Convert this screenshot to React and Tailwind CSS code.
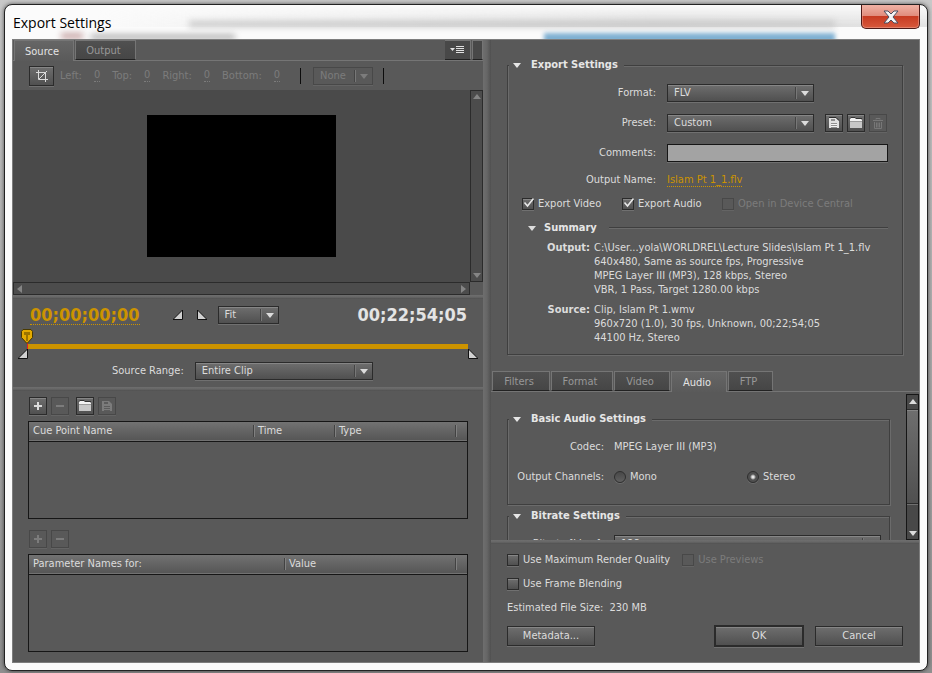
import React, { useState } from 'react'

const btn = 'border border-[#2b2b2b] bg-linear-to-b from-[#6e6e6e] to-[#505050] shadow-[inset_0_1px_0_#868686,0_1px_0_#707070]'
const offBtn = 'border border-[#484848] bg-[#595959] text-[#7c7c7c] shadow-[0_1px_0_#646464]'

function Triangle({ dir = 'down', className = '' }) {
  const points = {
    down: '0,2 8,2 4,7',
    up: '0,6 8,6 4,1',
    left: '6,0 6,8 1,4',
    right: '2,0 2,8 7,4',
  }
  return (
    <svg viewBox="0 0 8 8" className={`w-2 h-2 shrink-0 fill-current ${className}`}>
      <polygon points={points[dir]} />
    </svg>
  )
}

function Select({ id, label, options, className = '', disabled }) {
  return (
    <div className={`relative h-[18px] ${className}`}>
      <select
        id={id}
        aria-label={label}
        disabled={disabled}
        className={`block w-full h-full pl-1.5 pr-5 leading-4 appearance-none outline-none ${disabled ? offBtn : btn}`}
      >
        {options.map(o => <option key={o}>{o}</option>)}
      </select>
      <div className={`absolute right-[5px] inset-y-0 flex items-center gap-1 pointer-events-none ${disabled ? 'text-[#7c7c7c]' : 'text-[#dcdcdc]'}`}>
        <span className="w-0.5 h-3 border-l border-[#444] bg-[#777]" />
        <Triangle />
      </div>
    </div>
  )
}

function SmallButton({ label, disabled, className = '', children }) {
  return (
    <button
      aria-label={label}
      disabled={disabled}
      className={`w-[18px] h-[18px] shrink-0 flex items-center justify-center ${disabled ? offBtn : btn} ${className}`}
    >
      {children}
    </button>
  )
}

const PlusIcon = () => (
  <svg viewBox="0 0 10 10" className="w-2.5 h-2.5 fill-current"><path d="M4 1h2v3h3v2H6v3H4V6H1V4h3z" /></svg>
)

const MinusIcon = () => (
  <svg viewBox="0 0 10 10" className="w-2.5 h-2.5 fill-current"><path d="M1 4h8v2H1z" /></svg>
)

const FolderIcon = () => (
  <svg viewBox="0 0 14 12" className="w-3.5 h-3 shrink-0">
    <path d="M1 4V2l1-1h4l1 1h5l1 1v1z" fill="#f2f2f2" />
    <path d="M1 1.500 2 .5h4l1 1h6" fill="none" stroke="#333" />
    <path d="M1 4h12v7H1z" fill="#c8c8c8" />
    <path d="M1 4.500h12" stroke="#9c9c9c" />
  </svg>
)

function SaveIcon({ off }) {
  return (
    <svg viewBox="0 0 12 12" className="w-3 h-3 shrink-0">
      <path d="M1 1h7l3 3v7H1z" fill={off ? '#7c7c7c' : '#e2e2e2'} />
      <path d="M3 2h4v2H3zM3 6h6v5H3z" fill={off ? '#5c5c5c' : '#8f8f8f'} />
      <path d="M3 7.500h6M3 9.500h6" stroke={off ? '#7c7c7c' : '#f4f4f4'} />
      {!off && <path d="M1 .5h7l3 3" fill="none" stroke="#2b2b2b" />}
    </svg>
  )
}

const TrashIcon = () => (
  <svg viewBox="0 0 12 12" className="w-3 h-3 shrink-0 fill-none stroke-[#777]">
    <path d="M1 3.500h10M4 2.500V1.500h4v1M2.500 5v6.500h7V5M4.500 5.500v5M6 5.500v5M7.500 5.500v5" />
  </svg>
)

const CropIcon = () => (
  <svg viewBox="0 0 14 14" className="w-3.5 h-3.5 fill-none stroke-[#dadada]">
    <path d="M3.500 1v9.500H13M1 3.500h9.500V13M4 10 12 2" />
  </svg>
)

function Checkbox({ label, checked, disabled, className = '' }) {
  const [on, setOn] = useState(!!checked)
  return (
    <label className={`flex items-center gap-1 ${disabled ? 'text-[#7c7c7c]' : ''} ${className}`}>
      <span className="relative w-3 h-3 shrink-0">
        <input
          type="checkbox"
          checked={on}
          disabled={disabled}
          onChange={e => setOn(e.target.checked)}
          className={`block w-3 h-3 appearance-none ${disabled ? offBtn : btn}`}
        />
        {on && (
          <svg viewBox="0 0 12 12" className="absolute left-px -top-px w-3 h-3 fill-none stroke-[#e8e8e8] stroke-[1.6] pointer-events-none">
            <path d="M1.500 5.500 4.500 9 10.500 1.500" />
          </svg>
        )}
      </span>
      {label}
    </label>
  )
}

function Radio({ label, checked, onChange, className = '' }) {
  return (
    <label className={`flex items-center gap-1 ${className}`}>
      <input
        type="radio"
        name="channels"
        checked={checked}
        onChange={onChange}
        className={`w-3 h-3 appearance-none rounded-full border border-[#2e2e2e] shadow-[0_1px_0_#6b6b6b] ${checked
          ? 'bg-[radial-gradient(circle,#e6e6e6_0_1px,#505050_3px)]'
          : 'bg-linear-to-b from-[#484848] to-[#606060]'}`}
      />
      {label}
    </label>
  )
}

// the legend's own background hides the highlight line that runs behind it
function Group({ title, className = '', children }) {
  return (
    <fieldset className={`min-w-0 border border-[#3f3f3f] shadow-[inset_1px_1px_0_#6b6b6b,1px_1px_0_#6b6b6b] ${className}`}>
      <legend className="flex items-center gap-2.5 h-4 ml-px pl-1 pr-1.5 font-bold text-[#e6e6e6] bg-[#595959]">
        <Triangle />
        {title}
      </legend>
      {children}
    </fieldset>
  )
}

function Tab({ label, active, onClick, className = '' }) {
  return (
    <button
      role="tab"
      aria-selected={active}
      onClick={onClick}
      className={`pt-px pr-1 border border-[#757575] ${className} ${active
        ? 'h-[21px] border-b-0 bg-linear-to-b from-[#666] to-[#5a5a5a] text-[#e4e4e4]'
        : 'h-5 border-b-[#222] bg-linear-to-b from-[#505050] to-[#464646] text-[#989898]'}`}
    >
      {label}
    </button>
  )
}

const Divider = () => <div className="h-1 bg-linear-to-b from-[#6e6e6e] via-[#676767] to-[#4f4f4f]" />

function Grid({ columns, className = '' }) {
  return (
    <div className={`h-[98px] border border-[#161616] ${className}`}>
      <table className="w-full table-fixed border-collapse">
        <thead>
          <tr className="h-[19px] border-b border-[#161616] bg-linear-to-b from-[#727272] to-[#565656]">
            {columns.map(([name, width], i) => (
              <th key={i} className={`p-0 font-normal text-left ${width}`}>
                <span className={`flex items-center h-3 pl-1 ${i ? 'border-l border-[#424242] shadow-[inset_1px_0_0_#808080]' : ''}`}>{name}</span>
              </th>
            ))}
          </tr>
        </thead>
        <tbody />
      </table>
    </div>
  )
}

const Marker = ({ flip }) => (
  <svg viewBox="0 0 10 10" className="w-2.5 h-2.5 shrink-0 fill-[#d0d0d0]">
    <path d={flip ? 'M.5 0v9.500H10z' : 'M9.500 0v9.500H0z'} stroke="#111" />
    <path d={flip ? 'M1 2v7h7z' : 'M9 2v7H2z'} />
  </svg>
)

function Playhead() {
  return (
    <svg viewBox="0 0 12 20" className="absolute left-2 -top-0.5 w-3 h-5">
      <path d="M6.500 13v7" stroke="#d22" />
      <path d="M.5 2.500 2 .5h8l1.500 2v6L6.500 14h-1L.5 8.500z" fill="#e3aa00" stroke="#4a3a00" />
      <path d="M4 3v3M6 3v9M8 3v3" stroke="#553f00" />
    </svg>
  )
}

function SourcePanel() {
  const [tab, setTab] = useState('Source')
  return (
    <section className="min-w-0">
      <div className="flex h-[21px] pl-px border-b border-[#757575]">
        <div role="tablist" className="flex gap-px">
          <Tab label="Source" active={tab === 'Source'} onClick={() => setTab('Source')} className="w-[60px]" />
          <Tab label="Output" active={tab === 'Output'} onClick={() => setTab('Output')} className="w-[61px]" />
        </div>
        <button aria-label="Panel menu" className="ml-auto w-[26px] h-5 flex items-center justify-center border-y border-r border-[#757575] border-b-[#222] bg-[#484848]">
          <svg viewBox="0 0 15 10" className="w-[15px] h-2.5 fill-none stroke-[#e0e0e0]">
            <path d="M0 3h5L2.500 6z" fill="#e0e0e0" stroke="none" />
            <path d="M6 1.500h8M6 3.500h8M6 5.500h8M6 7.500h8" />
          </svg>
        </button>
        <div className="ml-px w-[11px] h-5 border border-[#757575] border-b-[#222] bg-[#484848]" />
      </div>

      <div className="flex items-center h-[29px] pl-4 pt-px text-[#7c7c7c]">
        <button aria-label="Crop" className={`w-[25px] h-5 mr-1.5 flex items-center justify-center ${btn}`}>
          <CropIcon />
        </button>
        {['Left', 'Top', 'Right', 'Bottom'].map(side => (
          <div key={side} className="flex gap-3 mr-3">
            {side}:
            <button disabled aria-label={side} className="h-3.5 leading-3.5 border-b border-dotted border-[#7c7c7c]">0</button>
          </div>
        ))}
        <span className="w-px h-4 ml-2 mr-3 bg-[#0c0c0c]" />
        <Select label="Crop proportions" options={['None']} disabled className="w-[60px]" />
        <span className="w-px h-4 ml-2.5 bg-[#0c0c0c]" />
      </div>

      <div className="grid grid-cols-[1fr_13px]">
        <div className="h-48 flex items-center justify-center bg-[#4a4a4a]">
          <div className="w-[189px] h-[142px] bg-black" />
        </div>
        <div className="flex flex-col justify-between items-center py-0.5 border border-[#2b2b2b] bg-[#4c4c4c] text-[#858585]">
          <Triangle dir="up" />
          <Triangle />
        </div>
        <div className="h-[13px] flex justify-between items-center px-0.5 border border-[#2b2b2b] bg-[#4c4c4c] text-[#858585]">
          <Triangle dir="left" />
          <Triangle dir="right" />
        </div>
      </div>

      <Divider />

      <div className="flex items-center h-8 pl-[17px] pr-4">
        <button className="h-5 text-lg leading-5 font-bold text-[#cc9300] border-b border-dotted border-[#cc9300]">00;00;00;00</button>
        <div className="flex gap-3.5 ml-[33px] mr-[11px]">
          <button aria-label="Set in point"><Marker /></button>
          <button aria-label="Set out point"><Marker flip /></button>
        </div>
        <Select label="Zoom" options={['Fit', '50%', '100%']} className="w-[61px]" />
        <span className="ml-auto text-lg leading-5 font-bold text-[#e4e4e4]">00;22;54;05</span>
      </div>

      <div className="relative pt-[13px] px-[15px]">
        <div className="h-[5px] bg-[#cc9300]" />
        <div className="flex justify-between -mx-2.5">
          <Marker />
          <Marker flip />
        </div>
        <Playhead />
      </div>

      <div className="flex items-center gap-[11px] pt-[3px] pb-[7px] pl-[99px]">
        <label htmlFor="range">Source Range:</label>
        <Select id="range" options={['Entire Clip', 'Work Area', 'Custom']} className="w-[178px]" />
      </div>

      <Divider />

      <div className="pl-[15px] pr-[15px] pt-1.5">
        <div className="flex gap-1 pl-px pb-1.5">
          <SmallButton label="Add cue point"><PlusIcon /></SmallButton>
          <SmallButton label="Remove cue point" disabled><MinusIcon /></SmallButton>
          <SmallButton label="Load cue points" className="ml-[3px]"><FolderIcon /></SmallButton>
          <SmallButton label="Save cue points" disabled><SaveIcon off /></SmallButton>
        </div>
        <Grid columns={[['Cue Point Name', ''], ['Time', 'w-[81px]'], ['Type', 'w-[121px]'], ['', 'w-[12px]']]} />
        <div className="flex gap-1 pl-px pt-[11px] pb-1.5">
          <SmallButton label="Add parameter" disabled><PlusIcon /></SmallButton>
          <SmallButton label="Remove parameter" disabled><MinusIcon /></SmallButton>
        </div>
        <Grid columns={[['Parameter Names for:', ''], ['Value', 'w-[171px]'], ['', 'w-[12px]']]} className="mb-2.5" />
      </div>
    </section>
  )
}

function Row({ label, htmlFor, className = '', children }) {
  return (
    <div className={`flex items-center gap-[11px] ${className}`}>
      <label htmlFor={htmlFor} className="w-[148px] shrink-0 text-right">{label}:</label>
      {children}
    </div>
  )
}

function ExportGroup() {
  return (
    <Group title="Export Settings" className="h-[298px]">
      <div className="pt-[5px]">
        <Row label="Format" htmlFor="format" className="h-[30px]">
          <Select id="format" options={['FLV', 'F4V', 'H.264']} className="w-[147px]" />
        </Row>
        <Row label="Preset" htmlFor="preset" className="h-[30px]">
          <Select id="preset" options={['Custom']} className="w-[147px]" />
          <div className="flex gap-1">
            <SmallButton label="Save preset"><SaveIcon /></SmallButton>
            <SmallButton label="Import preset"><FolderIcon /></SmallButton>
            <SmallButton label="Delete preset" disabled><TrashIcon /></SmallButton>
          </div>
        </Row>
        <Row label="Comments" htmlFor="comments" className="h-[30px] pr-3.5">
          <input id="comments" className="min-w-0 flex-1 h-[18px] px-1 border border-[#161616] bg-[#a3a3a3] text-black outline-none shadow-[0_1px_0_#707070]" />
        </Row>
        <Row label="Output Name" className="h-6">
          <a href="#" className="h-3.5 leading-3.5 text-[#cc9300] border-b border-dotted border-[#cc9300]">Islam Pt 1_1.flv</a>
        </Row>
      </div>
      <div className="flex items-center h-6 pl-3.5">
        <Checkbox label="Export Video" checked className="w-[100px]" />
        <Checkbox label="Export Audio" checked className="w-[100px]" />
        <Checkbox label="Open in Device Central" disabled />
      </div>
      <div className="flex items-center gap-2 h-6 pl-5 pr-3.5">
        <Triangle />
        <h3 className="font-bold text-[#e6e6e6]">Summary</h3>
        <span className="flex-1 h-0.5 ml-1 border-t border-[#3f3f3f] bg-[#6b6b6b]" />
      </div>
      <dl className="grid grid-cols-[82px_1fr] gap-x-1 gap-y-1.5 pt-px leading-3.5">
        <dt className="font-bold text-right">Output:</dt>
        <dd className="whitespace-nowrap">
          C:\User...yola\WORLDREL\Lecture Slides\Islam Pt 1_1.flv<br />
          640x480, Same as source fps, Progressive<br />
          MPEG Layer III (MP3), 128 kbps, Stereo<br />
          VBR, 1 Pass, Target 1280.00 kbps
        </dd>
        <dt className="font-bold text-right">Source:</dt>
        <dd className="whitespace-nowrap">
          Clip, Islam Pt 1.wmv<br />
          960x720 (1.0), 30 fps, Unknown, 00;22;54;05<br />
          44100 Hz, Stereo
        </dd>
      </dl>
    </Group>
  )
}

const TABS = [
  ['Filters', 'w-[58px]'],
  ['Format', 'w-[62px]'],
  ['Video', 'w-[56px]'],
  ['Audio', 'w-[56px]'],
  ['FTP', 'w-[45px]'],
]

function SettingsPanel() {
  const [tab, setTab] = useState('Audio')
  const [channels, setChannels] = useState('Stereo')
  return (
    <section className="min-w-0">
      <div className="pt-[17px] pl-4 pr-4">
        <ExportGroup />
      </div>

      <div role="tablist" className="flex gap-px h-[21px] mt-4 pl-px border-b border-[#757575]">
        {TABS.map(([name, width]) => (
          <Tab key={name} label={name} active={tab === name} onClick={() => setTab(name)} className={width} />
        ))}
      </div>

      <div className="flex h-[148px]">
        <div className="flex-1 min-w-0 h-full overflow-hidden pl-4 pr-4 pt-[19px]">
          <Group title="Basic Audio Settings" className="h-[94px]">
            <div className="flex items-center gap-2.5 h-[30px] mt-[5px]">
              <span className="w-24 text-right">Codec:</span>
              MPEG Layer III (MP3)
            </div>
            <div className="flex items-center h-[30px]">
              <span className="w-24 mr-2.5 text-right whitespace-nowrap">Output Channels:</span>
              <Radio label="Mono" checked={channels === 'Mono'} onChange={() => setChannels('Mono')} className="w-[133px]" />
              <Radio label="Stereo" checked={channels === 'Stereo'} onChange={() => setChannels('Stereo')} />
            </div>
          </Group>
          <Group title="Bitrate Settings" className="h-[94px] mt-[3px]">
            <div className="flex items-center gap-2.5 h-[30px] mt-[5px] pr-2">
              <label htmlFor="bitrate" className="w-24 text-right">Bitrate [kbps]:</label>
              <Select id="bitrate" options={['128']} className="flex-1" />
            </div>
          </Group>
        </div>
        <div className="w-[13px] mt-0.5 flex flex-col items-center border border-[#161616] bg-[#484848] text-[#dcdcdc]">
          <Triangle dir="up" className="my-[3px]" />
          <div className={`w-full h-[95px] border-x-0 ${btn}`} />
          <Triangle className="mt-auto mb-0.5" />
        </div>
      </div>

      <Divider />

      <div className="pl-4 pr-4 pt-1">
        <div className="flex items-center gap-3 h-6">
          <Checkbox label="Use Maximum Render Quality" />
          <Checkbox label="Use Previews" disabled />
        </div>
        <div className="flex items-center h-6">
          <Checkbox label="Use Frame Blending" />
        </div>
        <div className="flex items-center gap-1.5 h-6">
          <span>Estimated File Size:</span>
          <span>230 MB</span>
        </div>
        <div className="flex items-center h-8">
          <button className={`w-[88px] h-5 ${btn}`}>Metadata...</button>
          <button className={`ml-auto mr-[11px] w-[90px] h-[22px] ${btn} border-2`}>OK</button>
          <button className={`w-[88px] h-5 ${btn}`}>Cancel</button>
        </div>
      </div>
    </section>
  )
}

function TitleBar() {
  return (
    <header className="relative flex h-[34px] pl-2 pr-[7px]">
      <div className="absolute inset-0 overflow-hidden rounded-t-md">
        <div className="absolute left-0 right-0 top-0 h-[22px] bg-linear-to-r from-transparent from-10% via-[#dadada] via-70% to-[#e4e4e4] mask-t-from-10%" />
        <div className="absolute left-[20%] right-[10%] top-4 h-1.5 bg-[#c9c9c9] blur-[3px]" />
        <div className="absolute left-14 w-[22px] bottom-0 h-1.5 bg-[#c7a5a5] blur-[3px]" />
        <div className="absolute left-[86px] w-36 bottom-0 h-1 bg-[#999] blur-[3px]" />
        <div className="absolute left-[58.500%] right-[10%] -bottom-1 h-2.5 bg-[#7fb0d2] blur-[2px]" />
      </div>
      <h1 className="relative pt-1 text-[14px] leading-7 text-black font-['Open_Sans',sans-serif]">Export Settings</h1>
      <button
        aria-label="Close"
        className="relative ml-auto w-[59px] h-6 flex items-center justify-center rounded-b-[5px] border border-t-0 border-[#4d1a17] bg-[linear-gradient(#f0b3a6,#e08b7b_48%,#c73b22_50%,#d8593c)] shadow-[inset_0_0_0_1px_#f0a99c80]"
      >
        <svg viewBox="0 0 16 14" className="w-4 h-3.5">
          <path d="M1 1h4l3 3 3-3h4l-5 6 5 6h-4l-3-3-3 3H1l5-6z" fill="#f4f4f4" stroke="#4c4f60" />
        </svg>
      </button>
    </header>
  )
}

export default function App() {
  return (
    <main className="min-h-screen pt-1 pl-1 pr-1 bg-linear-to-b from-[#c8c8c8] to-[#8f8f8f] text-[11px] leading-4 text-[#dcdcdc] font-['DejaVu_Sans_Condensed','DejaVu_Sans',sans-serif]">
      <div className="rounded-lg border border-[#222] bg-[#fbfbfb] shadow-[0_0_4px_#0009]">
        <TitleBar />
        <div className="mx-[7px] mb-[7px] border border-[#7d7d7d] bg-[#595959] grid grid-cols-[470fr_8px_428fr]">
          <SourcePanel />
          <div className="bg-linear-to-r from-[#6e6e6e] via-[#666] to-[#505050]" />
          <SettingsPanel />
        </div>
      </div>
    </main>
  )
}
